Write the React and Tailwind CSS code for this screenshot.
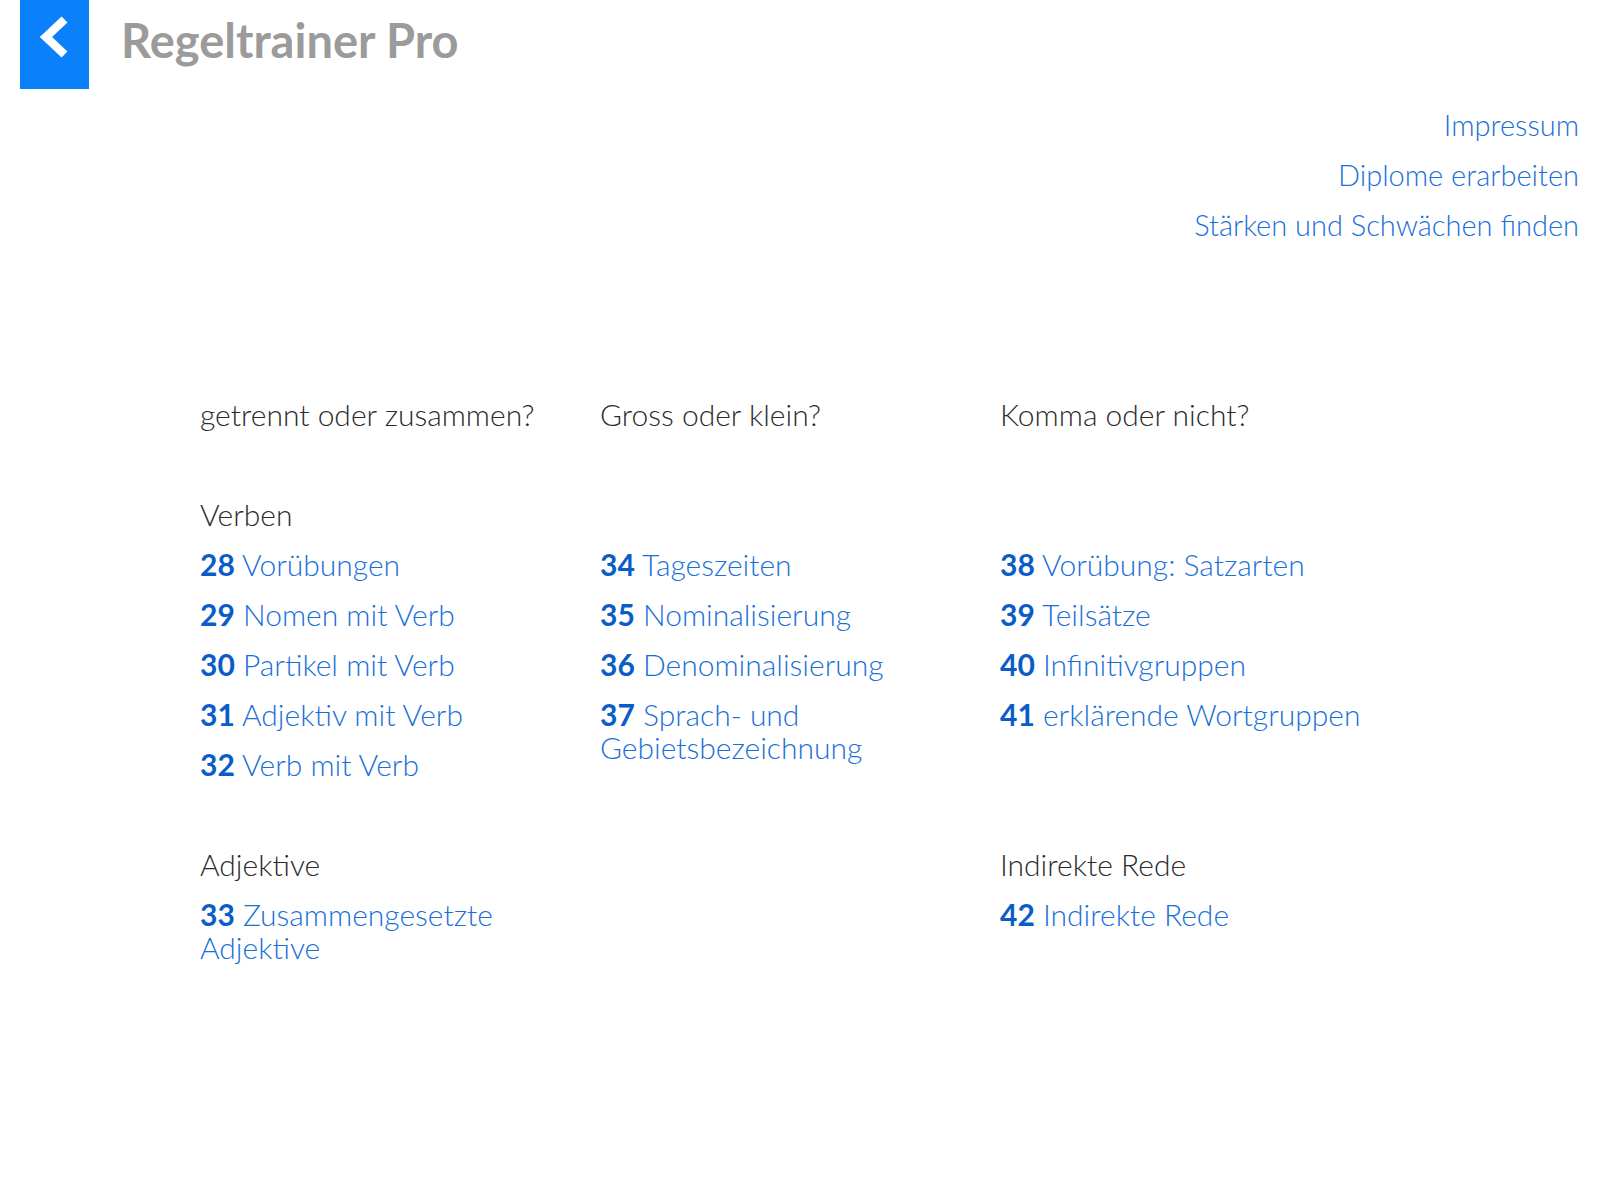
import React from 'react'

const font = { fontFamily: 'Lato, "Open Sans", sans-serif' }

// overview rows: titles, first block, second block
const titles = ['getrennt oder zusammen?', 'Gross oder klein?', 'Komma oder nicht?']

const blocks = [
    [
        {
            label: 'Verben',
            items: [
                ['28', 'Vorübungen'],
                ['29', 'Nomen mit Verb'],
                ['30', 'Partikel mit Verb'],
                ['31', 'Adjektiv mit Verb'],
                ['32', 'Verb mit Verb'],
            ],
        },
        {
            label: '',
            items: [
                ['34', 'Tageszeiten'],
                ['35', 'Nominalisierung'],
                ['36', 'Denominalisierung'],
                ['37', 'Sprach- und Gebietsbezeichnung'],
            ],
        },
        {
            label: '',
            items: [
                ['38', 'Vorübung: Satzarten'],
                ['39', 'Teilsätze'],
                ['40', 'Infinitivgruppen'],
                ['41', 'erklärende Wortgruppen'],
            ],
        },
    ],
    [
        { label: 'Adjektive', items: [['33', 'Zusammengesetzte Adjektive']] },
        { label: '', items: [] },
        { label: 'Indirekte Rede', items: [['42', 'Indirekte Rede']] },
    ],
]

const Item = ({ nr, text }) => (
    <a href="#" className="block text-[30px] leading-[33px] font-light text-[#1a6fd8] pr-8">
        <span className="font-bold text-[#0a5dc8]">{nr}</span> {text}
    </a>
)

const Block = ({ label, items }) => (
    <section>
        <h3 className="h-[33px] text-[30px] leading-[33px] font-light text-[#2b2b2b]">{label}</h3>
        <div className="flex flex-col gap-[17px] mt-[17px]">
            {items.map(([nr, text]) => (
                <Item key={nr} nr={nr} text={text} />
            ))}
        </div>
    </section>
)

const App = () => {
    return (
        <div className="min-h-[1200px] bg-white" style={font}>

            {/* header */}
            <header className="flex items-start">
                <button className="ml-5 w-[69px] h-[89px] bg-[#0a80fa]">
                    <svg width="69" height="89" viewBox="0 0 69 89" fill="none">
                        <path d="M44.5 19.5 L26 37 L44.5 54.5" stroke="white" strokeWidth="8.5" strokeLinejoin="miter" />
                    </svg>
                </button>
                <h1 className="ml-[32px] mt-[12px] text-[47px] leading-[56px] font-bold text-[#9b9b9b]">
                    Regeltrainer Pro
                </h1>
            </header>

            {/* top right links */}
            <nav className="flex flex-col items-end gap-[17px] pr-[21px] mt-[19px]">
                <a href="#" className="text-[29px] leading-[33px] font-light text-[#1a6fd8]">Impressum</a>
                <a href="#" className="text-[29px] leading-[33px] font-light text-[#1a6fd8]">Diplome erarbeiten</a>
                <a href="#" className="text-[29px] leading-[33px] font-light text-[#1a6fd8]">Stärken und Schwächen finden</a>
            </nav>

            {/* overview */}
            <main className="grid grid-cols-[400px_400px_400px] gap-y-[67px] ml-[200px] mt-[157px]">
                {titles.map((t) => (
                    <h2 key={t} className="text-[30px] leading-[33px] font-light text-[#2b2b2b]">{t}</h2>
                ))}
                {blocks.map((row, r) =>
                    row.map((b, c) => <Block key={r + '-' + c} label={b.label} items={b.items} />)
                )}
            </main>
        </div>
    )
}

export default App
